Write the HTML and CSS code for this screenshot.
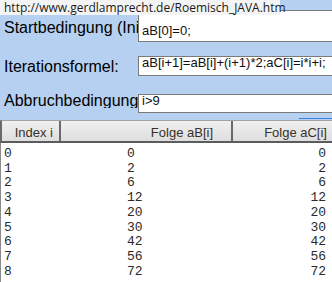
FILE: index.html
```html
<!DOCTYPE html>
<html lang="de">
<head>
<meta charset="utf-8">
<title>Roemisch JAVA</title>
<link rel="stylesheet" href="styles.css">
</head>
<body>
<div class="page">
  <div class="form">
    <div class="row row-start">
      <label class="label label-start">Startbedingung (Initialisierung):</label>
      <div class="field field-start">aB[0]=0;</div>
    </div>
    <div class="row row-iter">
      <label class="label label-iter">Iterationsformel:</label>
      <div class="field field-small">aB[i+1]=aB[i]+(i+1)*2;aC[i]=i*i+i;</div>
    </div>
    <div class="row row-stop">
      <label class="label label-stop">Abbruchbedingung:</label>
      <div class="field field-small field-stop">i&gt;9</div>
    </div>
  </div>
  <div class="linkbar"><span class="link-line"></span></div>
  <div class="table">
    <div class="thead">
      <div class="th th-index">Index i</div>
      <div class="th th-b">Folge aB[i]</div>
      <div class="th th-c">Folge aC[i]</div>
    </div>
    <div class="tbody">
      <span>0</span><span>0</span><span class="r">0</span>
      <span>1</span><span>2</span><span class="r">2</span>
      <span>2</span><span>6</span><span class="r">6</span>
      <span>3</span><span>12</span><span class="r">12</span>
      <span>4</span><span>20</span><span class="r">20</span>
      <span>5</span><span>30</span><span class="r">30</span>
      <span>6</span><span>42</span><span class="r">42</span>
      <span>7</span><span>56</span><span class="r">56</span>
      <span>8</span><span>72</span><span class="r">72</span>
    </div>
  </div>
  <div class="tooltip">http://www.gerdlamprecht.de/Roemisch_JAVA.htm</div>
</div>
</body>
</html>
```

FILE: styles.css
```css
html, body {
  margin: 0;
  padding: 0;
}
body {
  background: #b5d0f1;
  width: 332px;
  height: 282px;
  overflow: hidden;
}
.page {
  position: relative;
  height: 282px;
  overflow: hidden;
}
.form {
  padding-top: 10px;
}
.row {
  display: flex;
  align-items: flex-start;
  width: 420px;
}
.row-iter { margin-top: 14px; }
.row-stop { margin-top: 18px; }

.label {
  flex: 0 0 134px;
  padding-left: 4px;
  font-family: "Liberation Sans", Arial, sans-serif;
  font-size: 16px;
  line-height: 18px;
  color: #000;
  white-space: nowrap;
  overflow: hidden;
}
.label-start { padding-top: 9px; }
.label-iter { padding-top: 1.5px; }
.label-stop { line-height: 14px; }

.field {
  flex: 1 1 auto;
  background: #fff;
  border: 1px solid #7a7a7a;
  padding-left: 3px;
  font-family: "Liberation Sans", Arial, sans-serif;
  font-size: 13px;
  color: #111;
  white-space: nowrap;
}
.field-start {
  height: 15px;
  line-height: 15px;
  padding-top: 12px;
  padding-bottom: 3px;
}
.field-small {
  height: 11px;
  line-height: 11px;
  padding-top: 0;
  padding-bottom: 7px;
}
.field-stop {
  padding-bottom: 6px;
}

.linkbar {
  display: flex;
  justify-content: flex-end;
  margin-top: 5px;
  height: 1px;
}
.link-line {
  width: 33px;
  height: 1px;
  background: #3a7fd9;
}

.table {
  margin-top: 1px;
}
.thead {
  display: flex;
  border-top: 1px solid #a3a3a3;
  border-bottom: 2px solid #5c5c5c;
  border-left: 2px solid #6a6a6a;
  background: linear-gradient(#f0f0f0, #dedede);
  font-family: "Liberation Sans", Arial, sans-serif;
  font-size: 13px;
  color: #3a3226;
}
.th {
  padding-top: 4px;
  line-height: 16px;
  text-align: right;
  white-space: nowrap;
}
.th-index {
  flex: 0 0 51px;
  padding-right: 6px;
  border-right: 2px solid #6a6a6a;
}
.th-b {
  flex: 0 0 152px;
  padding-right: 18px;
  border-right: 2px solid #6a6a6a;
}
.th-c {
  flex: 1 1 auto;
  padding-right: 5px;
}

.tbody {
  display: grid;
  grid-template-columns: 123px 1fr auto;
  align-content: start;
  background: #fff;
  border-left: 1px solid #8a8a8a;
  padding: 4px 6px 0 3px;
  height: 200px;
  font-family: "Liberation Mono", "Courier New", monospace;
  font-size: 13px;
  line-height: 14.7px;
  color: #2a2a2a;
}
.tbody .r {
  text-align: right;
}

.tooltip {
  position: absolute;
  top: 0;
  left: 0;
  width: 276px;
  height: 15px;
  padding-left: 4px;
  background: #f4f4f4;
  font-family: "Open Sans", "Noto Sans", sans-serif;
  font-size: 12px;
  line-height: 15px;
  color: #1a1a1a;
  white-space: nowrap;
}
```
